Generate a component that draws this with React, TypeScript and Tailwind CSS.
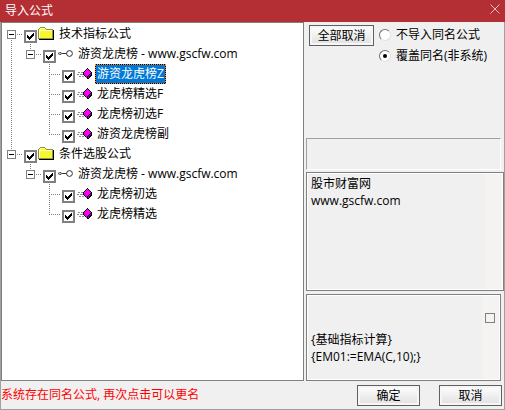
import { useState } from 'react';

type Guide = 'none' | 'line' | 'tee' | 'end' | 'root' | 'last';
type IconName = 'folder' | 'key' | 'gem';

interface FormulaNode {
  id: string;
  label: string;
  icon: IconName;
  guides: Guide[];
}

const nodes: FormulaNode[] = [
  { id: 'tech', label: '技术指标公式', icon: 'folder', guides: ['root'] },
  { id: 'tech-group', label: '游资龙虎榜 - www.gscfw.com', icon: 'key', guides: ['line', 'last'] },
  { id: 'tech-1', label: '游资龙虎榜Z', icon: 'gem', guides: ['line', 'none', 'tee'] },
  { id: 'tech-2', label: '龙虎榜精选F', icon: 'gem', guides: ['line', 'none', 'tee'] },
  { id: 'tech-3', label: '龙虎榜初选F', icon: 'gem', guides: ['line', 'none', 'tee'] },
  { id: 'tech-4', label: '游资龙虎榜副', icon: 'gem', guides: ['line', 'none', 'end'] },
  { id: 'cond', label: '条件选股公式', icon: 'folder', guides: ['last'] },
  { id: 'cond-group', label: '游资龙虎榜 - www.gscfw.com', icon: 'key', guides: ['none', 'last'] },
  { id: 'cond-1', label: '龙虎榜初选', icon: 'gem', guides: ['none', 'none', 'tee'] },
  { id: 'cond-2', label: '龙虎榜精选', icon: 'gem', guides: ['none', 'none', 'end'] },
];

const guidePaths: Record<Guide, string> = {
  none: '',
  line: 'M9.5 0V20',
  tee: 'M9.5 0V20M11 10.5H21',
  end: 'M9.5 0V11M11 10.5H21',
  root: 'M9.5 16V20M15 10.5H21',
  last: 'M9.5 0V6M15 10.5H21',
};

function GuideCell({ guide }: { guide: Guide }) {
  const expandable = guide === 'root' || guide === 'last';
  return (
    <svg className="h-5 w-[19px] shrink-0 overflow-visible" viewBox="0 0 19 20" shapeRendering="crispEdges" aria-hidden="true">
      <path d={guidePaths[guide]} stroke="#808080" strokeDasharray="1 1" fill="none" />
      {expandable && (
        <>
          <rect x="5.5" y="6.5" width="8" height="8" fill="#fff" stroke="#808080" />
          <path d="M7 10.5H12" stroke="#000" />
        </>
      )}
    </svg>
  );
}

function NodeIcon({ name }: { name: IconName }) {
  if (name === 'folder') {
    return (
      <svg className="size-4 shrink-0" viewBox="0 0 16 16" shapeRendering="crispEdges" aria-hidden="true">
        <path d="M1 13.5H15.5V4" stroke="#000" fill="none" />
        <path d="M0 13V3H1V2H2V1H7V2H8V3H15V13Z" fill="#909040" />
        <path d="M1 12V3H2V2H7V3H8V4H14V12Z" fill="#ffff00" />
        <path d="M1.5 12V3.5M2 2.5H7M2 4.5H14" stroke="#ffffc0" fill="none" />
        <path d="M3 5.5H14M3 7.5H14M3 9.5H14M3 11.5H14" stroke="#ecec60" strokeDasharray="1 1" />
        <path d="M2 6.5H14M2 8.5H14M2 10.5H14" stroke="#ecec60" strokeDasharray="1 1" />
      </svg>
    );
  }
  if (name === 'key') {
    return (
      <svg className="size-4 shrink-0" viewBox="0 0 16 16" aria-hidden="true">
        <path d="M4 7.5H10" stroke="#303030" />
        <path d="M1 7.5L2.5 6.5H4L5 7.5L4 8.5H2.5Z" stroke="#404040" strokeWidth="0.8" fill="#c0c0c0" />
        <circle cx="12.5" cy="7.5" r="2.9" stroke="#303030" fill="#fff" />
      </svg>
    );
  }
  return (
    <svg className="size-4 shrink-0" viewBox="0 0 16 16" shapeRendering="crispEdges" aria-hidden="true">
      <path d="M2 6.5H4M5 6.5H7M1 8.5H3M4 8.5H7M3 10.5H5M6 10.5H8" stroke="#909090" />
      <path d="M11 2H12V3H13V4H14V5H15V6H16V10H15V11H14V12H13V13H11V12H10V11H9V10H8V9H7V6H8V5H9V4H10V3H11Z" fill="#000" />
      <path d="M11 3H12V4H13V5H14V6H15V7H14V8H13V9H12V10H11V9H10V8H9V7H8V6H9V5H10V4H11Z" fill="#ff00ff" />
      <path d="M8 7H9V8H10V9H11V12H10V10H9V9H8Z" fill="#e000e0" />
      <path d="M12 10H13V9H14V8H15V9H14V10H13V12H12Z" fill="#a000a0" />
    </svg>
  );
}

function TreeRow({ node, selected, onSelect }: { node: FormulaNode; selected: boolean; onSelect: () => void }) {
  return (
    <li className="flex h-5 items-center">
      {node.guides.map((guide, i) => (
        <GuideCell key={i} guide={guide} />
      ))}
      <label htmlFor={node.id} className="flex h-5 items-center" onClick={onSelect}>
        <span className="mt-1 ml-[3px] grid size-[13px]">
          <input
            id={node.id}
            type="checkbox"
            defaultChecked
            className="peer col-start-1 row-start-1 size-[13px] appearance-none border-2 border-[#808080] bg-white"
          />
          <svg
            className="pointer-events-none invisible col-start-1 row-start-1 size-[13px] peer-checked:visible"
            viewBox="0 0 13 13"
            shapeRendering="crispEdges"
            aria-hidden="true"
          >
            <path d="M3 5V8H4V9H5V10H6V9H7V8H8V7H9V6H10V3H9V4H8V5H7V6H6V7H5V6H4V5Z" fill="#000" />
          </svg>
        </span>
        <span className="ml-px">
          <NodeIcon name={node.icon} />
        </span>
        {selected ? (
          <span className="ml-[3px] h-5 border border-dotted border-[#ff8728] bg-black whitespace-nowrap text-white">
            <span className="block bg-[#0078d7] px-px leading-[18px]">{node.label}</span>
          </span>
        ) : (
          <span className="ml-[3px] h-5 px-0.5 leading-5 whitespace-nowrap">{node.label}</span>
        )}
      </label>
    </li>
  );
}

const buttonClass =
  'h-[21px] border border-[#606060] bg-linear-to-b from-white to-[#e0e0e0] text-center leading-[19px] shadow-[inset_0_0_0_2px_#f6f6f6]';

const radioClass =
  'grid size-3 appearance-none place-items-center rounded-full border border-t-[#707070] border-r-[#e0e0e0] border-b-[#e0e0e0] border-l-[#707070] bg-white before:size-1 before:rounded-full checked:before:bg-black';

export default function App() {
  const [selected, setSelected] = useState('tech-1');

  return (
    <div className="flex min-h-screen flex-col bg-[#f0f0f0] font-['Open_Sans','Noto_Sans_CJK_SC',sans-serif] text-xs text-black">
      <header className="flex h-[22px] items-center justify-between bg-[#b32f33] pr-1 pl-[5px] text-white">
        <h1>导入公式</h1>
        <button type="button" aria-label="关闭" className="pb-1">
          <svg className="size-3" viewBox="0 0 12 12" aria-hidden="true">
            <path d="M1.5 1.5L10.5 10.5M10.5 1.5L1.5 10.5" stroke="#e8c0c0" fill="none" />
          </svg>
        </button>
      </header>

      <div className="flex flex-1 flex-col border-x border-b border-[#a0a0a0]">
        <main className="flex flex-1">
          <ul className="min-w-0 flex-1 border border-[#808080] bg-white pt-px">
            {nodes.map((node) => (
              <TreeRow key={node.id} node={node} selected={node.id === selected} onSelect={() => setSelected(node.id)} />
            ))}
          </ul>

          <section className="flex w-50 flex-col pt-[3px] pl-0.5">
            <div className="flex flex-1 items-start pl-[3px]">
              <button type="button" className={`${buttonClass} w-[65px]`}>
                全部取消
              </button>
              <div className="ml-[5px] flex flex-col gap-px">
                <label className="flex h-5 items-center gap-[5px] whitespace-nowrap">
                  <input type="radio" name="conflict" className={radioClass} />
                  不导入同名公式
                </label>
                <label className="flex h-5 items-center gap-[5px] whitespace-nowrap">
                  <input type="radio" name="conflict" defaultChecked className={radioClass} />
                  覆盖同名(非系统)
                </label>
              </div>
            </div>

            <div className="mr-[3px] h-8 border border-t-[#a0a0a0] border-r-white border-b-white border-l-[#a0a0a0]" />

            <div className="mt-0.5 flex h-[119px] border border-[#808080] p-px shadow-[inset_0_0_0_1px_white]">
              <textarea
                readOnly
                aria-label="说明"
                defaultValue={'股市财富网\nwww.gscfw.com'}
                className="min-w-0 flex-1 resize-none overflow-hidden pt-px pl-[3px] leading-[17px] outline-none"
              />
              <div className="w-[17px] bg-[#f4f3f1]" />
            </div>

            <div className="mt-[3px] mr-[3px] flex h-[87px] border border-[#808080] p-px shadow-[inset_0_0_0_1px_white]">
              <textarea
                readOnly
                aria-label="公式源码"
                defaultValue={'\n\n{基础指标计算}\n{EM01:=EMA(C,10);}'}
                className="min-w-0 flex-1 resize-none overflow-hidden pt-px pl-[3px] leading-[17px] outline-none"
              />
              <div className="w-[17px] bg-[#f4f3f1] pt-[17px] pl-[3px]">
                <span className="block size-2.5 border border-[#808080]" />
              </div>
            </div>
          </section>
        </main>

        <footer className="flex h-7 items-center justify-between pr-0.5">
          <p className="text-[#ff0000]">系统存在同名公式, 再次点击可以更名</p>
          <div className="flex gap-[19px]">
            <button type="button" className={`${buttonClass} w-[63px]`}>
              确定
            </button>
            <button type="button" className={`${buttonClass} w-[63px]`}>
              取消
            </button>
          </div>
        </footer>
      </div>
    </div>
  );
}
